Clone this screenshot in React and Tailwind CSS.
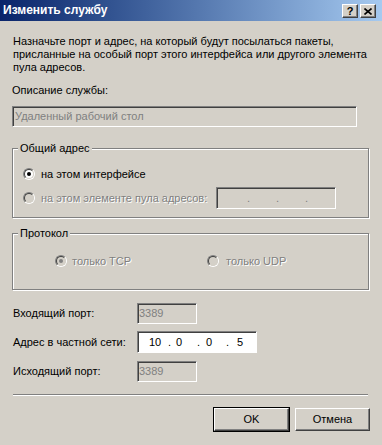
import React from "react";

const sunken =
  "border border-t-[#808080] border-l-[#808080] border-r-white border-b-white shadow-[inset_1px_1px_0_#404040]";
const raised =
  "border border-t-white border-l-white border-r-[#404040] border-b-[#404040] shadow-[inset_-1px_-1px_0_#808080]";
const etched = "border border-[#808080] shadow-[inset_1px_1px_0_#fff,1px_1px_0_#fff]";
const disabledText = "text-[#808080] [text-shadow:1px_1px_0_#fff]";

function Radio({ checked, disabled }) {
  return (
    <span className="flex h-[12px] w-[12px] shrink-0 rounded-full border border-t-[#808080] border-l-[#808080] border-r-white border-b-white">
      <span
        className={`flex flex-1 items-center justify-center rounded-full border border-t-[#404040] border-l-[#404040] border-r-[#d4d0c8] border-b-[#d4d0c8] ${
          disabled ? "bg-[#d4d0c8]" : "bg-white"
        }`}
      >
        {checked && (
          <span className={`h-[4px] w-[4px] rounded-full ${disabled ? "bg-[#808080]" : "bg-black"}`} />
        )}
      </span>
    </span>
  );
}

function GroupBox({ title, className, children }) {
  return (
    <div className={`relative ${etched} ${className}`}>
      <span className="absolute left-[5px] top-[-7px] bg-[#d4d0c8] px-[2px] leading-[13px]">{title}</span>
      {children}
    </div>
  );
}

function PortRow({ label, children }) {
  return (
    <div className="flex h-[22px] items-center">
      <span className="w-[125px] pl-[1px]">{label}</span>
      {children}
    </div>
  );
}

function PortBox({ value }) {
  return (
    <div className={`flex h-[21px] w-[60px] items-center ${sunken} pl-[1px] text-[#808080]`}>{value}</div>
  );
}

export default function App() {
  return (
    <div
      className="h-[445px] w-[382px] overflow-hidden bg-[#d4d0c8] text-[11px] leading-[13px] text-black"
      style={{ fontFamily: '"Liberation Sans", Arial, sans-serif' }}
    >
      {/* title bar */}
      <div className="flex h-[21px] items-center justify-between bg-linear-to-r from-[#0a246a] to-[#a6caf0] pl-[3px] pr-[6px]">
        <span className="text-[12px] font-bold text-white">Изменить службу</span>
        <div className="flex gap-[2px] pt-[1px]">
          <button className={`flex h-[14px] w-[16px] items-center justify-center bg-[#d4d0c8] ${raised} text-[11px] font-bold leading-none`}>
            ?
          </button>
          <button className={`flex h-[14px] w-[16px] items-center justify-center bg-[#d4d0c8] ${raised}`}>
            <svg width="8" height="7" viewBox="0 0 8 7">
              <path d="M0.5 0.5L7.5 6.5M7.5 0.5L0.5 6.5" stroke="#000" strokeWidth="1.6" />
            </svg>
          </button>
        </div>
      </div>

      <div className="px-[12px]">
        <div className="mt-[14px] pl-[1px]">
          <div>Назначьте порт и адрес, на который будут посылаться пакеты,</div>
          <div>присланные на особый порт этого интерфейса или другого элемента</div>
          <div>пула адресов.</div>
        </div>

        <div className="mt-[10px]">Описание службы:</div>
        <div className={`mt-[9px] flex h-[21px] w-[345px] items-center ${sunken} pl-[2px] text-[#808080]`}>
          Удаленный рабочий стол
        </div>

        <GroupBox title="Общий адрес" className="mt-[21px] w-[357px] pb-[8px] pl-[10px] pt-[14px]">
          <div className="flex h-[22px] items-center gap-[6px]">
            <Radio checked />
            <span>на этом интерфейсе</span>
          </div>
          <div className="mt-[2px] flex h-[22px] items-center">
            <Radio disabled />
            <span className={`ml-[6px] w-[175px] ${disabledText}`}>на этом элементе пула адресов:</span>
            <div className={`flex h-[22px] w-[120px] items-center ${sunken} text-[#808080]`}>
              <span className="ml-[30px] w-[29px]">.</span>
              <span className="w-[29px]">.</span>
              <span>.</span>
            </div>
          </div>
        </GroupBox>

        <GroupBox title="Протокол" className="mt-[15px] w-[357px] pb-[17px] pl-[42px] pt-[16px]">
          <div className="flex h-[22px] items-center">
            <div className="flex w-[152px] items-center gap-[5px]">
              <Radio checked disabled />
              <span className={disabledText}>только TCP</span>
            </div>
            <div className="flex items-center gap-[7px]">
              <Radio disabled />
              <span className={disabledText}>только UDP</span>
            </div>
          </div>
        </GroupBox>

        <div className="mt-[12px] flex flex-col gap-[7px]">
          <PortRow label="Входящий порт:">
            <PortBox value="3389" />
          </PortRow>
          <PortRow label="Адрес в частной сети:">
            <div className={`flex h-[22px] w-[120px] items-center bg-white ${sunken} pl-[11px]`}>
              <span className="w-[19px]">10</span>
              <span className="w-[8px]">.</span>
              <span className="w-[21px]">0</span>
              <span className="w-[9px]">.</span>
              <span className="w-[20px]">0</span>
              <span className="w-[11px]">.</span>
              <span>5</span>
            </div>
          </PortRow>
          <PortRow label="Исходящий порт:">
            <PortBox value="3389" />
          </PortRow>
        </div>

        <div className="ml-[1px] mt-[12px] h-[2px] w-[355px] border-t border-t-[#808080] border-b border-b-white" />

        <div className="mt-[12px] flex justify-end gap-[6px]">
          <button className={`h-[23px] w-[75px] bg-[#d4d0c8] ${raised} outline outline-1 outline-black`}>OK</button>
          <button className={`h-[23px] w-[75px] bg-[#d4d0c8] ${raised}`}>Отмена</button>
        </div>
      </div>
    </div>
  );
}
